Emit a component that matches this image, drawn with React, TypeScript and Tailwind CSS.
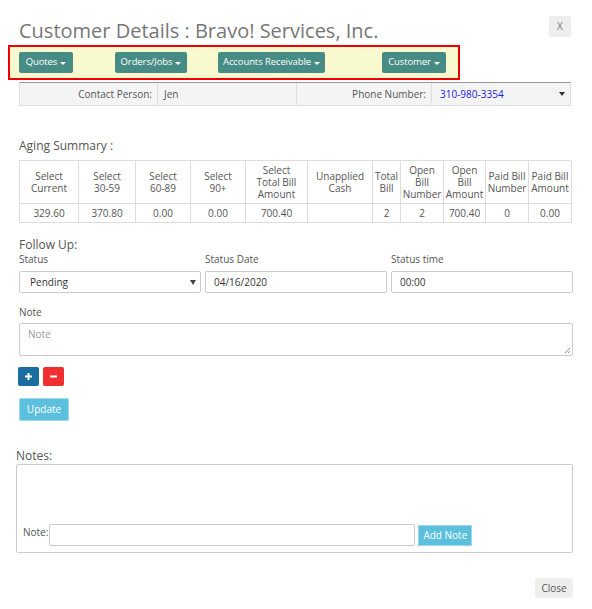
import React from 'react';

export default function App() {
  // aging summary columns (px widths match the grid below)
  const aging = [
    { head: ['Select', 'Current'], value: '329.60' },
    { head: ['Select', '30-59'], value: '370.80' },
    { head: ['Select', '60-89'], value: '0.00' },
    { head: ['Select', '90+'], value: '0.00' },
    { head: ['Select', 'Total Bill', 'Amount'], value: '700.40' },
    { head: ['Unapplied', 'Cash'], value: '' },
    { head: ['Total', 'Bill'], value: '2' },
    { head: ['Open', 'Bill', 'Number'], value: '2' },
    { head: ['Open', 'Bill', 'Amount'], value: '700.40' },
    { head: ['Paid Bill', 'Number'], value: '0' },
    { head: ['Paid Bill', 'Amount'], value: '0.00' },
  ];

  const menus = [
    { label: 'Quotes', cls: 'ml-[9px] w-[54px]' },
    { label: 'Orders/Jobs', cls: 'ml-[42px] w-[72px]' },
    { label: 'Accounts Receivable', cls: 'ml-[31px] w-[107px]' },
    { label: 'Customer', cls: 'ml-[57px] w-[64px]' },
  ];

  return (
    <div className="w-[592px] h-[609px] bg-white text-[#555] font-['Open_Sans',sans-serif] overflow-hidden">
      {/* Header */}
      <div className="flex items-start justify-between pl-[19px] pr-[21px] pt-[16px]">
        <h1 className="mt-[3px] text-[20px] leading-[24px] font-normal text-[#777]">
          Customer Details : Bravo! Services, Inc.
        </h1>
        <button className="w-[22px] h-[21px] rounded-[2px] bg-[#eeeeee] text-[10px] text-[#777]">X</button>
      </div>

      {/* Menu bar */}
      <div className="mt-[2px] ml-[8px] w-[452px] h-[35px] border-2 border-[#ee0000] bg-[#f9f9d0] flex items-center">
        {menus.map((m) => (
          <button
            key={m.label}
            className={`${m.cls} h-[21px] rounded-[2px] bg-[#468c84] text-white text-[9.5px] tracking-[-0.1px] flex items-center justify-center gap-[3px]`}
          >
            {m.label}
            <span className="inline-block w-0 h-0 border-l-[3px] border-r-[3px] border-t-[3px] border-l-transparent border-r-transparent border-t-white mt-[1px]" />
          </button>
        ))}
      </div>

      {/* Contact row */}
      <div className="mt-[2px] ml-[19px] w-[552px] h-[24px] flex bg-[#f4f4f4] border-t border-t-[#999] border-b border-b-[#ddd] border-r border-r-[#ddd] border-l border-l-[#ddd] text-[10px]">
        <div className="w-[138px] flex items-center justify-end pr-[5px] border-r border-[#ddd]">Contact Person:</div>
        <div className="w-[139px] flex items-center pl-[6px] border-r border-[#ddd]">Jen</div>
        <div className="w-[135px] flex items-center justify-end pr-[5px] border-r border-[#ddd]">Phone Number:</div>
        <div className="flex-1 flex items-center justify-between pl-[8px] pr-[5px] text-[#1a1ae6]">
          310-980-3354
          <span className="inline-block w-0 h-0 border-l-[3px] border-r-[3px] border-t-[4px] border-l-transparent border-r-transparent border-t-[#333]" />
        </div>
      </div>

      {/* Aging Summary */}
      <div className="mt-[33px] ml-[19px] text-[12px] leading-[14px]">Aging Summary :</div>
      <div className="mt-[7px] ml-[19px] w-[552px] grid grid-cols-[59px_57px_55px_55px_62px_65px_28px_43px_42px_43px_43px] border-t border-l border-[#ddd] text-[10px] leading-[12px]">
        {aging.map((c, i) => (
          <div key={'h' + i} className="h-[43px] flex flex-col items-center justify-center text-center border-r border-b border-[#ddd]">
            {c.head.map((l) => (
              <span key={l} className="block h-[12px] leading-[12px]">{l}</span>
            ))}
          </div>
        ))}
        {aging.map((c, i) => (
          <div key={'v' + i} className="h-[19px] flex items-center justify-center border-r border-b border-[#ddd]">
            {c.value}
          </div>
        ))}
      </div>

      {/* Follow Up */}
      <div className="mt-[15px] ml-[19px] text-[12px] leading-[14px]">Follow Up:</div>
      <div className="ml-[19px] w-[554px] grid grid-cols-3 gap-x-[4px] text-[10px]">
        <div>
          <div className="h-[16px] leading-[14px]">Status</div>
          <div className="h-[22px] mt-[3px] border border-[#ccc] rounded-[2px] flex items-center justify-between pl-[10px] pr-[4px] text-[#333]">
            Pending
            <span className="inline-block w-0 h-0 border-l-[3px] border-r-[3px] border-t-[5px] border-l-transparent border-r-transparent border-t-[#444]" />
          </div>
        </div>
        <div>
          <div className="h-[16px] leading-[14px]">Status Date</div>
          <div className="h-[22px] mt-[3px] border border-[#ccc] rounded-[2px] flex items-center pl-[8px] text-[#333]">04/16/2020</div>
        </div>
        <div>
          <div className="h-[16px] leading-[14px]">Status time</div>
          <div className="h-[22px] mt-[3px] border border-[#ccc] rounded-[2px] flex items-center pl-[8px] text-[#333]">00:00</div>
        </div>
      </div>

      <div className="mt-[12px] ml-[19px] text-[10px] leading-[14px]">Note</div>
      <div className="mt-[4px] ml-[19px] w-[554px] h-[33px] border border-[#ccc] rounded-[2px] relative">
        <span className="absolute left-[8px] top-[3px] text-[10px] text-[#999]">Note</span>
        <svg className="absolute right-[1px] bottom-[1px]" width="7" height="7" viewBox="0 0 7 7">
          <path d="M1 6L6 1M4 6L6 4" stroke="#777" strokeWidth="0.8" />
        </svg>
      </div>

      <div className="mt-[11px] ml-[18px] flex gap-[4px]">
        <button className="w-[21px] h-[19px] rounded-[2px] bg-[#1b6d9f] flex items-center justify-center">
          <svg width="9" height="9" viewBox="0 0 9 9">
            <path d="M4.5 1v7M1 4.5h7" stroke="white" strokeWidth="2" />
          </svg>
        </button>
        <button className="w-[21px] h-[19px] rounded-[2px] bg-[#f03030] flex items-center justify-center">
          <svg width="9" height="9" viewBox="0 0 9 9">
            <path d="M1 4.5h7" stroke="white" strokeWidth="2" />
          </svg>
        </button>
      </div>

      <button className="mt-[12px] ml-[19px] w-[50px] h-[23px] rounded-[2px] bg-[#5bc0de] border border-[#9fd6e8] text-white text-[10px]">
        Update
      </button>

      {/* Notes */}
      <div className="mt-[28px] ml-[16px] text-[12px] leading-[14px]">Notes:</div>
      <div className="mt-[1px] ml-[16px] w-[557px] h-[89px] border border-[#ccc] rounded-[2px] flex items-end pb-[6px] pl-[6px]">
        <span className="text-[10px] text-[#555] mb-[6px] mr-[1px]">Note:</span>
        <div className="w-[366px] h-[22px] border border-[#ccc] rounded-[2px]" />
        <button className="ml-[3px] w-[54px] h-[21px] bg-[#5bc0de] border border-[#9fd6e8] text-white text-[10px]">Add Note</button>
      </div>

      <div className="flex justify-end pr-[19px] mt-[25px]">
        <button className="w-[38px] h-[20px] rounded-[2px] bg-[#eeeeee] text-[10px] text-[#555]">Close</button>
      </div>
    </div>
  );
}
